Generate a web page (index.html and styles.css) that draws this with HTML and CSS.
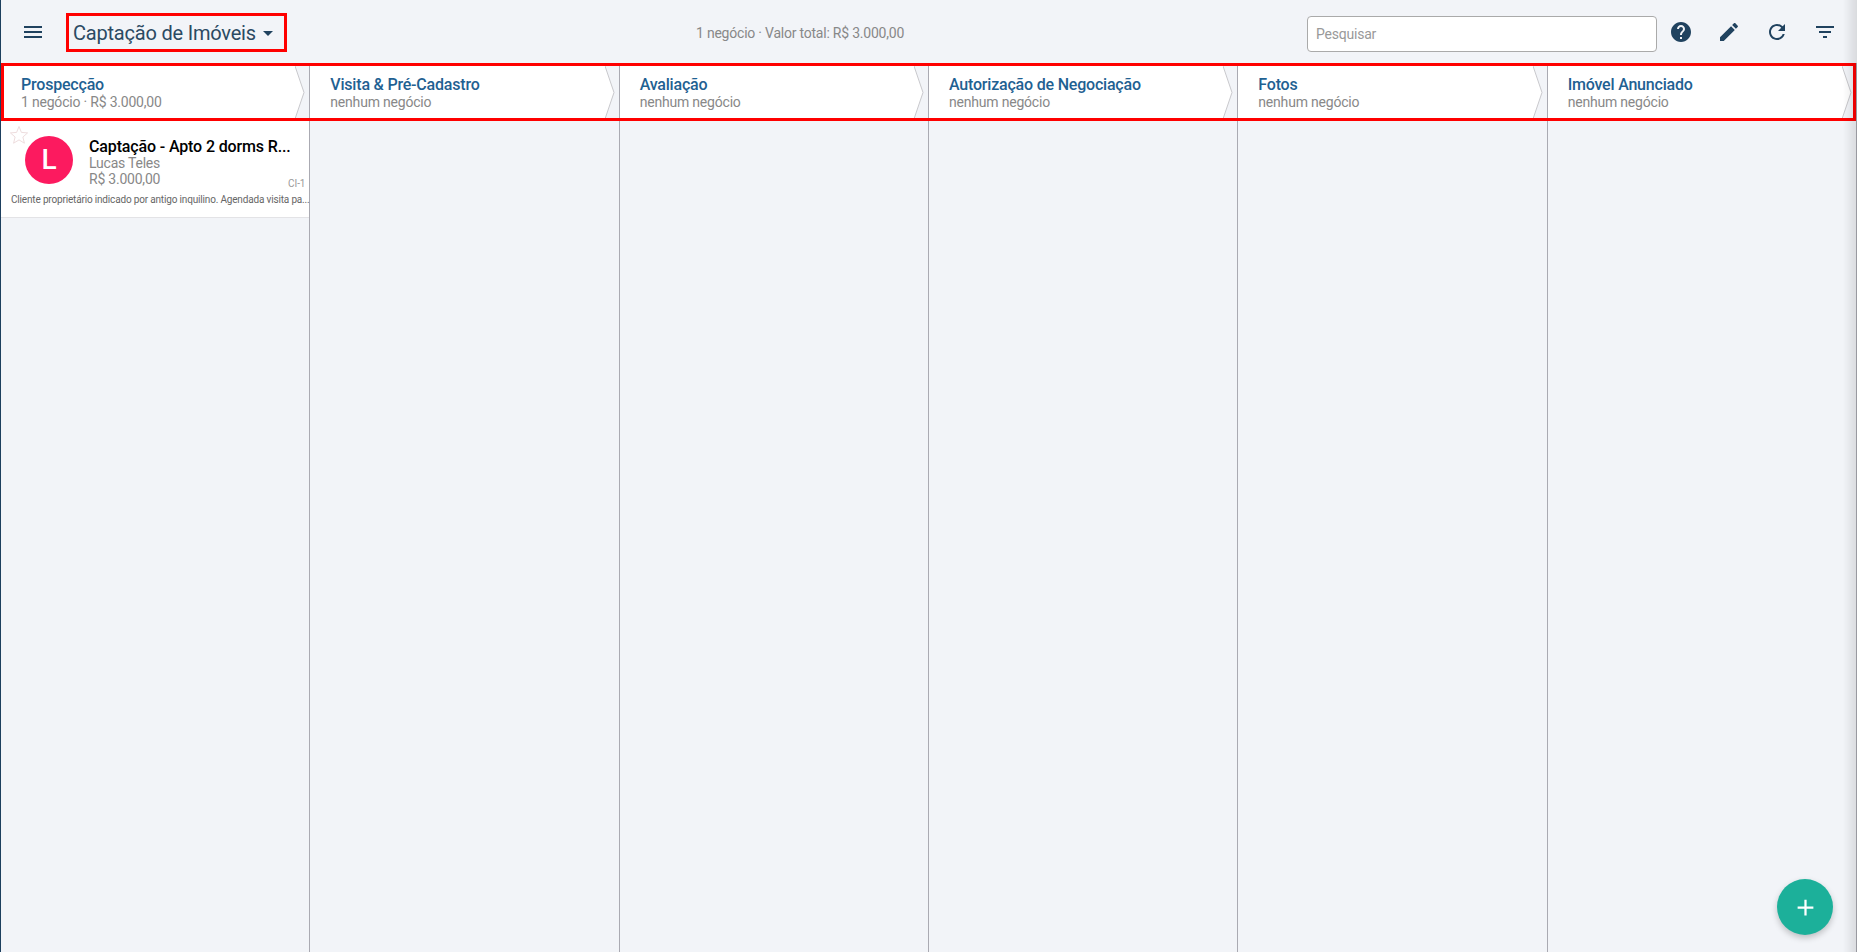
FILE: index.html
```html
<!DOCTYPE html>
<html lang="pt-BR">
<head>
<meta charset="utf-8">
<title>Captação de Imóveis</title>
<link rel="stylesheet" href="styles.css">
</head>
<body>
<div class="app">
  <header class="topbar">
    <button class="icon-btn menu-btn" type="button" aria-label="Menu">
      <svg viewBox="0 0 24 24" class="icon"><path d="M3 18h18v-2H3v2zm0-5h18v-2H3v2zm0-7v2h18V6H3z"/></svg>
    </button>
    <div class="pipeline-select">
      <span class="pipeline-name">Captação de Imóveis</span>
      <svg viewBox="0 0 24 24" class="icon caret"><path d="M7 10l5 5 5-5z"/></svg>
    </div>
    <div class="summary">1 negócio · Valor total: R$ 3.000,00</div>
    <div class="search"><input class="search-input" type="text" placeholder="Pesquisar"></div>
    <div class="actions">
      <button class="icon-btn" type="button" aria-label="Ajuda">
        <svg viewBox="0 0 24 24" class="icon"><path d="M12 2C6.48 2 2 6.48 2 12s4.48 10 10 10 10-4.48 10-10S17.52 2 12 2zm1 17h-2v-2h2v2zm2.07-7.75l-.9.92C13.45 12.9 13 13.5 13 15h-2v-.5c0-1.1.45-2.1 1.17-2.83l1.24-1.26c.37-.36.59-.86.59-1.41 0-1.1-.9-2-2-2s-2 .9-2 2H8c0-2.21 1.79-4 4-4s4 1.79 4 4c0 .88-.36 1.68-.93 2.25z"/></svg>
      </button>
      <button class="icon-btn" type="button" aria-label="Editar">
        <svg viewBox="0 0 24 24" class="icon"><path d="M3 17.25V21h3.75L17.81 9.94l-3.75-3.75L3 17.25zM20.71 7.04c.39-.39.39-1.02 0-1.41l-2.34-2.34c-.39-.39-1.02-.39-1.41 0l-1.83 1.83 3.75 3.75 1.83-1.83z"/></svg>
      </button>
      <button class="icon-btn" type="button" aria-label="Atualizar">
        <svg viewBox="0 0 24 24" class="icon"><path d="M17.65 6.35C16.2 4.9 14.21 4 12 4c-4.42 0-7.99 3.58-7.99 8s3.57 8 7.99 8c3.73 0 6.84-2.55 7.73-6h-2.08c-.82 2.33-3.04 4-5.65 4-3.31 0-6-2.69-6-6s2.69-6 6-6c1.66 0 3.14.69 4.22 1.78L13 11h7V4l-2.35 2.35z"/></svg>
      </button>
      <button class="icon-btn" type="button" aria-label="Filtrar">
        <svg viewBox="0 0 24 24" class="icon"><path d="M10 18h4v-2h-4v2zM3 6v2h18V6H3zm3 7h12v-2H6v2z"/></svg>
      </button>
    </div>
  </header>

  <section class="stages">
    <div class="stage">
      <div class="stage-body"><div class="stage-name">Prospecção</div><div class="stage-info">1 negócio · R$ 3.000,00</div></div>
      <svg class="chevron" viewBox="0 0 10 53" preserveAspectRatio="none"><path class="chevron-fill" d="M0 0L9 26.5L0 53z"/><path class="chevron-line" d="M0 0L9 26.5L0 53"/></svg>
    </div>
    <div class="stage">
      <div class="stage-body"><div class="stage-name">Visita &amp; Pré-Cadastro</div><div class="stage-info">nenhum negócio</div></div>
      <svg class="chevron" viewBox="0 0 10 53" preserveAspectRatio="none"><path class="chevron-fill" d="M0 0L9 26.5L0 53z"/><path class="chevron-line" d="M0 0L9 26.5L0 53"/></svg>
    </div>
    <div class="stage">
      <div class="stage-body"><div class="stage-name">Avaliação</div><div class="stage-info">nenhum negócio</div></div>
      <svg class="chevron" viewBox="0 0 10 53" preserveAspectRatio="none"><path class="chevron-fill" d="M0 0L9 26.5L0 53z"/><path class="chevron-line" d="M0 0L9 26.5L0 53"/></svg>
    </div>
    <div class="stage">
      <div class="stage-body"><div class="stage-name">Autorização de Negociação</div><div class="stage-info">nenhum negócio</div></div>
      <svg class="chevron" viewBox="0 0 10 53" preserveAspectRatio="none"><path class="chevron-fill" d="M0 0L9 26.5L0 53z"/><path class="chevron-line" d="M0 0L9 26.5L0 53"/></svg>
    </div>
    <div class="stage">
      <div class="stage-body"><div class="stage-name">Fotos</div><div class="stage-info">nenhum negócio</div></div>
      <svg class="chevron" viewBox="0 0 10 53" preserveAspectRatio="none"><path class="chevron-fill" d="M0 0L9 26.5L0 53z"/><path class="chevron-line" d="M0 0L9 26.5L0 53"/></svg>
    </div>
    <div class="stage">
      <div class="stage-body"><div class="stage-name">Imóvel Anunciado</div><div class="stage-info">nenhum negócio</div></div>
      <svg class="chevron" viewBox="0 0 10 53" preserveAspectRatio="none"><path class="chevron-fill" d="M0 0L9 26.5L0 53z"/><path class="chevron-line" d="M0 0L9 26.5L0 53"/></svg>
    </div>
  </section>

  <main class="board">
    <div class="column">
      <article class="deal">
        <svg class="star" viewBox="0 0 20 20"><path d="M10 1.5l2.4 5.9 6.2.5-4.7 4.1 1.5 6.2L10 14.9l-5.4 3.3 1.5-6.2L1.4 7.9l6.2-.5z"/></svg>
        <div class="deal-main">
          <div class="avatar">L</div>
          <div class="deal-text">
            <div class="deal-title">Captação - Apto 2 dorms R...</div>
            <div class="deal-owner">Lucas Teles</div>
            <div class="deal-bottom"><span class="deal-value">R$ 3.000,00</span><span class="deal-code">CI-1</span></div>
          </div>
        </div>
        <p class="deal-note">Cliente proprietário indicado por antigo inquilino. Agendada visita pa...</p>
      </article>
    </div>
    <div class="column"></div>
    <div class="column"></div>
    <div class="column"></div>
    <div class="column"></div>
    <div class="column"></div>
  </main>
</div>
<button class="fab" type="button" aria-label="Adicionar">
  <svg viewBox="0 0 24 24" class="fab-icon"><path d="M19 13h-6v6h-2v-6H5v-2h6V5h2v6h6v2z"/></svg>
</button>
<div class="edge-shade"></div>
</body>
</html>
```
FILE: styles.css
```css
* { box-sizing: border-box; }
html, body { margin: 0; height: 100%; overflow: hidden; }
body {
  background: #f2f4f8;
  font-family: Roboto, "Liberation Sans", sans-serif;
  border-left: 1px solid #1d3f5e;
}
.app { display: flex; flex-direction: column; height: 952px; }

.topbar { display: flex; align-items: center; height: 63px; flex: none; padding-left: 8px; position: relative; }
.icon-btn {
  width: 48px; height: 48px; padding: 0; border: 0; background: none; margin-top: 1px;
  display: flex; align-items: center; justify-content: center;
}
.icon { width: 24px; height: 24px; fill: #20425f; display: block; }
.menu-btn { margin-right: 9px; }
.pipeline-select {
  display: flex; align-items: center; width: 221px; height: 39px; margin-top: 2px;
  padding-left: 4px; border: 3px solid #f00;
}
.pipeline-name { font-size: 20px; letter-spacing: -.2px; color: #2b4a63; white-space: nowrap; }
.caret { margin-left: 0; flex: none; }
.summary { margin-left: 409px; margin-top: 3px; width: 211px; font-size: 14px; letter-spacing: -.22px; color: #888; white-space: nowrap; }
.search { margin-left: 400px; margin-top: 5px; }
.search-input {
  display: block; width: 350px; height: 36px; padding: 0 8px;
  border: 1px solid #aaa; border-radius: 4px; background: #fff;
  font: 14px Roboto, sans-serif; letter-spacing: -.22px; color: #333;
}
.search-input::placeholder { color: #999; opacity: 1; }
.actions { display: flex; }

.stages { display: grid; grid-template-columns: repeat(6, 1fr); height: 58px; flex: none; position: relative; }
.stages::after {
  content: ""; position: absolute; top: 0; bottom: 0; left: 0; right: 1px;
  border: 3px solid #f00;
}
.stage { display: flex; padding: 3px 4px 3px 0; border-right: 1px solid #aaaab2; min-width: 0; }
.stage-body { flex: 1; background: #fff; padding: 10px 0 0 20px; min-width: 0; }
.stage-name { font-size: 16px; letter-spacing: -.2px; line-height: 18px; font-weight: 500; color: #1f6192; white-space: nowrap; }
.stage-info { font-size: 14px; letter-spacing: -.2px; line-height: 16px; color: #888; white-space: nowrap; }
.chevron { width: 10px; height: 100%; flex: none; display: block; }
.chevron-fill { fill: #fff; }
.chevron-line { fill: none; stroke: #c8c8cc; stroke-width: 1; }

.board { display: grid; grid-template-columns: repeat(6, 1fr); flex: 1; min-height: 0; }
.column { border-right: 1px solid #aaaab2; min-width: 0; }

.deal { position: relative; background: #fff; height: 97px; border-bottom: 1px solid #e3e3e6; padding: 15px 4px 0 10px; }
.star { position: absolute; left: 8px; top: 4px; width: 20px; height: 20px; fill: none; stroke: #eeddde; stroke-width: 1; }
.deal-main { display: flex; }
.avatar {
  width: 48px; height: 48px; border-radius: 50%; flex: none; margin-left: 14px;
  background: #fc1a5f; color: #fff; font-size: 28px; font-weight: 500; line-height: 48px; text-align: center;
}
.deal-text { flex: 1; min-width: 0; margin-left: 16px; padding-top: 1px; }
.deal-title { font-size: 16px; letter-spacing: -.14px; line-height: 20px; font-weight: 500; color: #000; white-space: nowrap; }
.deal-owner { font-size: 14px; letter-spacing: -.22px; line-height: 15px; color: #888; margin-top: -1px; }
.deal-bottom { display: flex; justify-content: space-between; align-items: flex-end; }
.deal-value { font-size: 14px; letter-spacing: -.22px; line-height: 17px; color: #888; }
.deal-code { font-size: 10px; line-height: 12px; letter-spacing: -.1px; color: #999; margin-bottom: -2px; }
.deal-note { margin: 5px 0 0; font-size: 10px; letter-spacing: -.17px; line-height: 14px; color: #666; white-space: nowrap; }

.fab {
  position: fixed; left: 1777px; top: 879px; width: 56px; height: 56px; padding: 0; border: 0; border-radius: 50%;
  background: #1cb09a; box-shadow: 0 3px 6px rgba(0,0,0,.22);
  display: flex; align-items: center; justify-content: center;
}
.fab-icon { width: 27px; height: 27px; fill: #fff; }
.edge-shade {
  position: fixed; top: 0; right: 0; bottom: 0; width: 14px; pointer-events: none;
  background: linear-gradient(to right, rgba(0,0,0,0), rgba(0,0,0,.1));
}
```
